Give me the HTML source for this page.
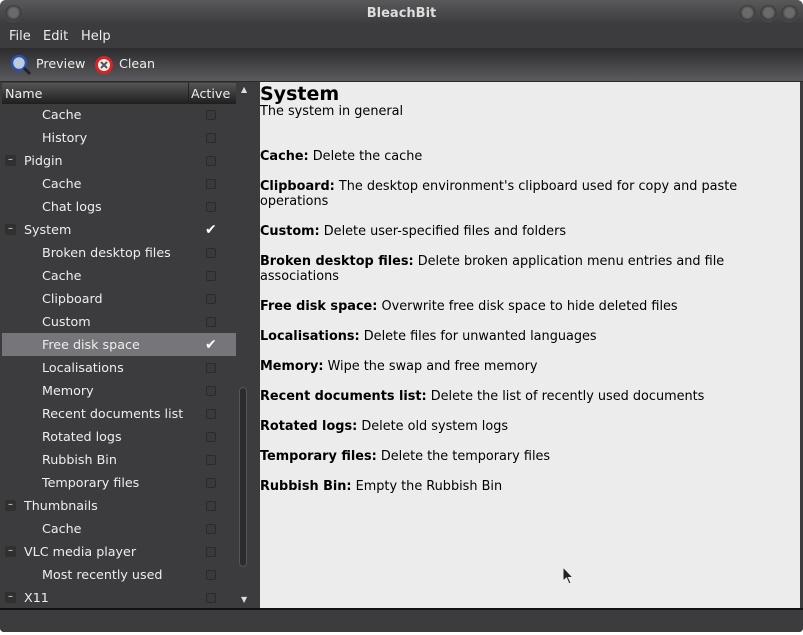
<!DOCTYPE html>
<html><head><style>
*{margin:0;padding:0;box-sizing:border-box}
body{width:803px;height:635px;background:#fff;font-family:"DejaVu Sans",sans-serif;font-size:12.7px;overflow:hidden;position:relative}
.win{position:absolute;left:0;top:0;width:803px;height:632px;background:#3c3c3e;border-radius:6px 6px 4px 4px;overflow:hidden}
.title{position:absolute;top:0;left:0;right:0;height:24px;background:linear-gradient(#59595b,#3c3c3e);color:#ddd;font-weight:bold;text-align:center;line-height:27px;font-size:13px}
.btn{position:absolute;top:5px;width:17px;height:17px;border-radius:50%;background:radial-gradient(circle at 50% 45%,#6a6a6a 35%,#3a3a3a 60%,#555 75%)}
.menu{position:absolute;top:24px;left:0;height:24px;color:#eee;font-size:13px}
.menu span{position:absolute;top:5px}
.tb{position:absolute;top:48px;left:0;right:0;height:34px;background:linear-gradient(#2c2c2e,#5b5b5f);border-bottom:1px solid #2a2a2a;color:#eee}
.tb span{position:absolute;top:8px}
.left{position:absolute;top:82px;left:0;width:259px;height:526px;background:#3c3c3e}
.hdr{position:absolute;top:1px;left:2px;width:234px;height:21px;background:linear-gradient(#555,#1e1e1e);color:#eee}
.row{position:absolute;left:0;width:234px;height:23px;color:#eee;line-height:23px}
.row.sel{background:#76767a}
.cb{position:absolute;left:204px;top:7px;width:10px;height:10px;border:1px solid #2a2a2a;border-radius:2px;background:#3a3a3c}
.ck{position:absolute;left:203px;top:1px;color:#fff;font-size:14px}
.ex{position:absolute;left:3px;top:6px;width:11px;height:11px;background:#303030;border-radius:2px;color:#eee;font-size:10px;line-height:10px;text-align:center}
.right{position:absolute;left:260px;top:82px;width:540px;height:526px;background:#ececec;color:#000;font-size:12.85px}
.right p{position:absolute;left:0;line-height:15px;width:520px}
.bot{position:absolute;top:608px;left:0;right:0;height:24px;background:#3c3c3e;border-top:2px solid #111}
</style></head><body>
<div class="win">
<div class="title">BleachBit</div>
<div class="btn" style="left:5px"></div>
<div class="btn" style="left:739px"></div><div class="btn" style="left:760px"></div><div class="btn" style="left:781px"></div>
<div class="menu"><span style="left:9px">File</span><span style="left:43px">Edit</span><span style="left:81px">Help</span></div>
<div class="tb">
<svg style="position:absolute;left:10px;top:6px" width="22" height="22"><circle cx="9" cy="9" r="7" fill="#bcd" stroke="#2a50b0" stroke-width="2.5"/><line x1="14" y1="14" x2="20" y2="20" stroke="#222" stroke-width="3"/></svg>
<span style="left:36px">Preview</span>
<svg style="position:absolute;left:94px;top:7px" width="20" height="20"><circle cx="10" cy="10" r="9" fill="#d22"/><circle cx="10" cy="10" r="6" fill="#eee"/><path d="M7 7L13 13M13 7L7 13" stroke="#555" stroke-width="2"/></svg>
<span style="left:119px">Clean</span>
</div>
<div class="left">
<div class="hdr"><span style="position:absolute;left:3px;top:3px">Name</span><span style="position:absolute;left:186px;top:0;width:1px;height:21px;background:#222"></span><span style="position:absolute;left:189px;top:3px">Active</span></div>
<div style="position:absolute;left:241px;top:3px;color:#ddd;font-size:8px">▲</div>
<div style="position:absolute;left:241px;top:513px;color:#ddd;font-size:8px">▼</div>
<div style="position:absolute;left:239px;top:305px;width:8px;height:180px;border-radius:4px;background:#2c2c2c;border:1px solid #555"></div>
<div style="position:absolute;left:2px;top:22px;width:234px;height:504px;overflow:hidden">
<div style="position:absolute;left:0;top:-1px;width:234px;height:510px">
<div class="row" style="top:0"><span style="margin-left:40px">Cache</span><div class="cb"></div></div>
<div class="row" style="top:23px"><span style="margin-left:40px">History</span><div class="cb"></div></div>
<div class="row" style="top:46px"><div class="ex">–</div><span style="margin-left:22px">Pidgin</span><div class="cb"></div></div>
<div class="row" style="top:69px"><span style="margin-left:40px">Cache</span><div class="cb"></div></div>
<div class="row" style="top:92px"><span style="margin-left:40px">Chat logs</span><div class="cb"></div></div>
<div class="row" style="top:115px"><div class="ex">–</div><span style="margin-left:22px">System</span><div class="ck">✔</div></div>
<div class="row" style="top:138px"><span style="margin-left:40px">Broken desktop files</span><div class="cb"></div></div>
<div class="row" style="top:161px"><span style="margin-left:40px">Cache</span><div class="cb"></div></div>
<div class="row" style="top:184px"><span style="margin-left:40px">Clipboard</span><div class="cb"></div></div>
<div class="row" style="top:207px"><span style="margin-left:40px">Custom</span><div class="cb"></div></div>
<div class="row sel" style="top:230px"><span style="margin-left:40px">Free disk space</span><div class="ck">✔</div></div>
<div class="row" style="top:253px"><span style="margin-left:40px">Localisations</span><div class="cb"></div></div>
<div class="row" style="top:276px"><span style="margin-left:40px">Memory</span><div class="cb"></div></div>
<div class="row" style="top:299px"><span style="margin-left:40px">Recent documents list</span><div class="cb"></div></div>
<div class="row" style="top:322px"><span style="margin-left:40px">Rotated logs</span><div class="cb"></div></div>
<div class="row" style="top:345px"><span style="margin-left:40px">Rubbish Bin</span><div class="cb"></div></div>
<div class="row" style="top:368px"><span style="margin-left:40px">Temporary files</span><div class="cb"></div></div>
<div class="row" style="top:391px"><div class="ex">–</div><span style="margin-left:22px">Thumbnails</span><div class="cb"></div></div>
<div class="row" style="top:414px"><span style="margin-left:40px">Cache</span><div class="cb"></div></div>
<div class="row" style="top:437px"><div class="ex">–</div><span style="margin-left:22px">VLC media player</span><div class="cb"></div></div>
<div class="row" style="top:460px"><span style="margin-left:40px">Most recently used</span><div class="cb"></div></div>
<div class="row" style="top:483px"><div class="ex">–</div><span style="margin-left:22px">X11</span><div class="cb"></div></div>
</div>
</div>
</div>
<div class="right">
<p style="top:1px;font-size:19px;font-weight:bold;line-height:22px">System</p>
<p style="top:22px">The system in general</p>
<p style="top:67px"><b>Cache:</b> Delete the cache</p>
<p style="top:97px"><b>Clipboard:</b> The desktop environment's clipboard used for copy and paste operations</p>
<p style="top:142px"><b>Custom:</b> Delete user-specified files and folders</p>
<p style="top:172px"><b>Broken desktop files:</b> Delete broken application menu entries and file associations</p>
<p style="top:217px"><b>Free disk space:</b> Overwrite free disk space to hide deleted files</p>
<p style="top:247px"><b>Localisations:</b> Delete files for unwanted languages</p>
<p style="top:277px"><b>Memory:</b> Wipe the swap and free memory</p>
<p style="top:307px"><b>Recent documents list:</b> Delete the list of recently used documents</p>
<p style="top:337px"><b>Rotated logs:</b> Delete old system logs</p>
<p style="top:367px"><b>Temporary files:</b> Delete the temporary files</p>
<p style="top:397px"><b>Rubbish Bin:</b> Empty the Rubbish Bin</p>
<svg style="position:absolute;left:302px;top:484px" width="14" height="20"><path d="M1 1L1 15L4.5 12L7 18L9 17L6.5 11.5L11 11.5Z" fill="#222" stroke="#eee" stroke-width="1"/></svg>
</div>
<div class="bot"></div>
</div>
</body></html>
